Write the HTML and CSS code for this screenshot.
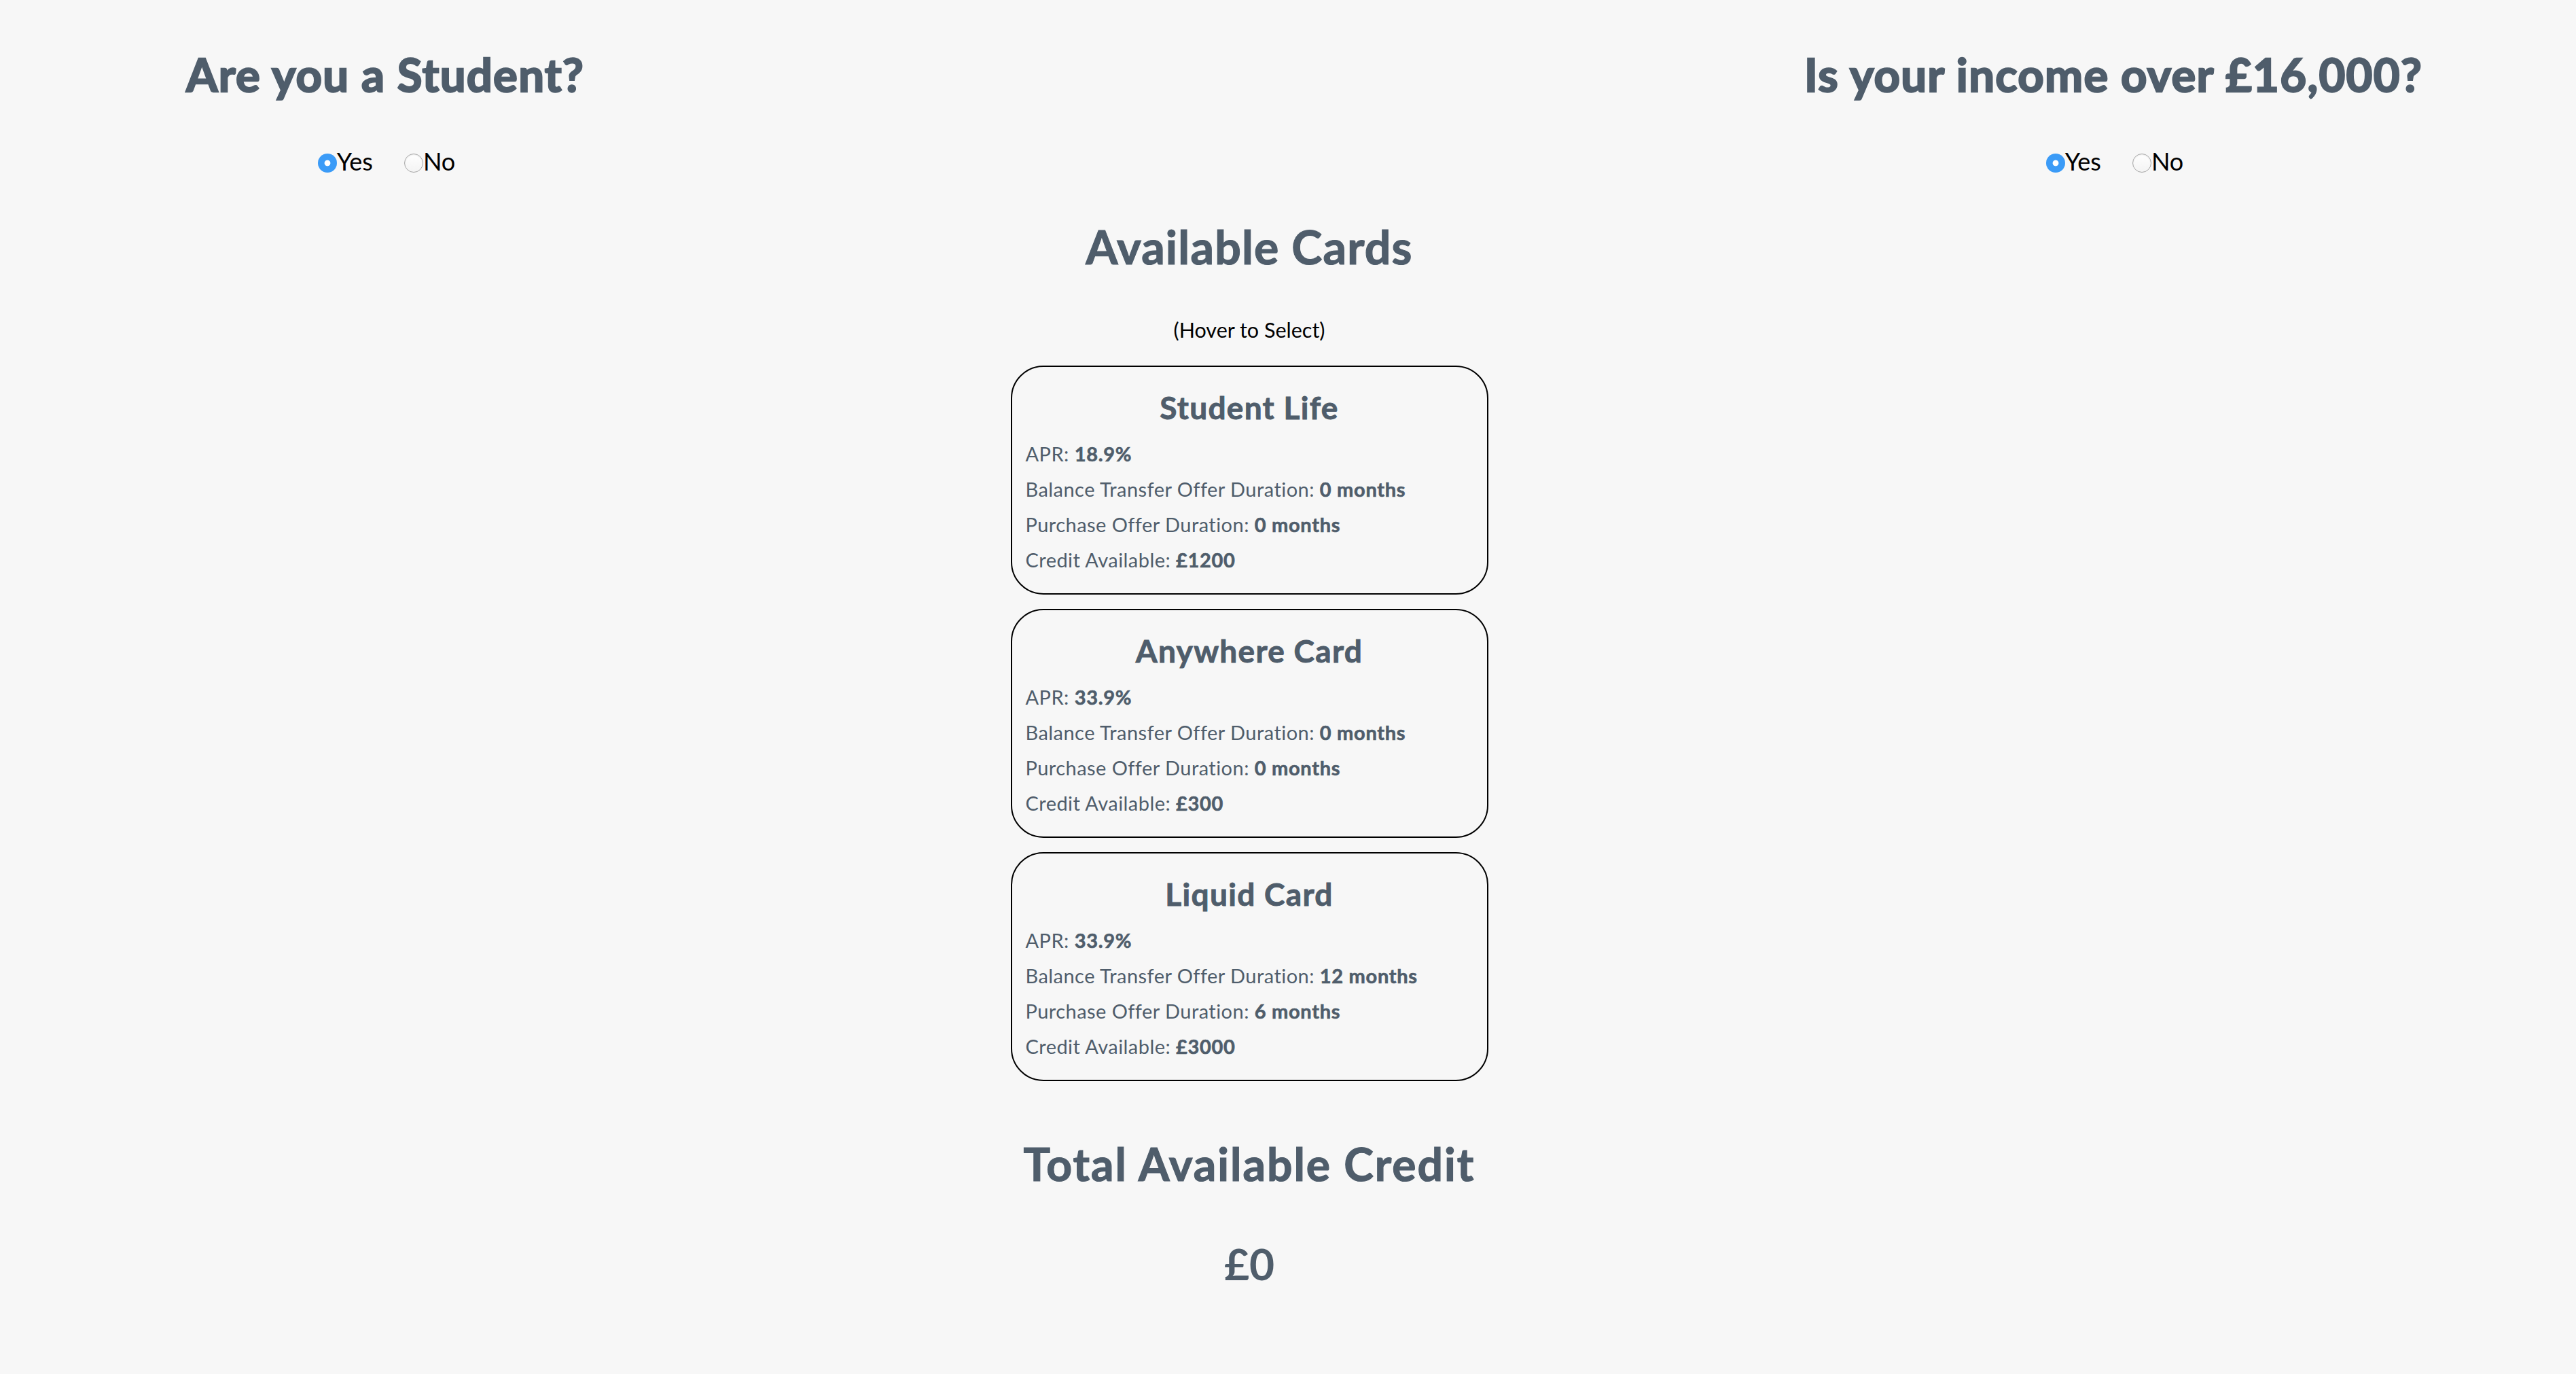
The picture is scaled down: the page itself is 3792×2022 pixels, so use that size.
FILE: index.html
```html
<!DOCTYPE html>
<html lang="en">
<head>
<meta charset="utf-8">
<title>Credit Cards</title>
<link rel="stylesheet" href="styles.css">
</head>
<body>
  <div class="top">
    <div class="question">
      <h1 class="q-title">Are you a Student?</h1>
      <div class="choices">
        <label class="choice"><input type="radio" name="student" checked>Yes</label>
        <label class="choice"><input type="radio" name="student">No</label>
      </div>
    </div>
    <div class="question">
      <h1 class="q-title">Is your income over £16,000?</h1>
      <div class="choices">
        <label class="choice"><input type="radio" name="income" checked>Yes</label>
        <label class="choice"><input type="radio" name="income">No</label>
      </div>
    </div>
  </div>

  <main class="main">
    <h2 class="section-title">Available Cards</h2>
    <p class="hint">(Hover to Select)</p>

    <div class="cards">
      <div class="card">
        <h3 class="card-title">Student Life</h3>
        <p class="row">APR: <b>18.9%</b></p>
        <p class="row">Balance Transfer Offer Duration: <b>0 months</b></p>
        <p class="row">Purchase Offer Duration: <b>0 months</b></p>
        <p class="row">Credit Available: <b>£1200</b></p>
      </div>
      <div class="card">
        <h3 class="card-title">Anywhere Card</h3>
        <p class="row">APR: <b>33.9%</b></p>
        <p class="row">Balance Transfer Offer Duration: <b>0 months</b></p>
        <p class="row">Purchase Offer Duration: <b>0 months</b></p>
        <p class="row">Credit Available: <b>£300</b></p>
      </div>
      <div class="card">
        <h3 class="card-title">Liquid Card</h3>
        <p class="row">APR: <b>33.9%</b></p>
        <p class="row">Balance Transfer Offer Duration: <b>12 months</b></p>
        <p class="row">Purchase Offer Duration: <b>6 months</b></p>
        <p class="row">Credit Available: <b>£3000</b></p>
      </div>
    </div>

    <h2 class="total-title">Total Available Credit</h2>
    <p class="total">£0</p>
  </main>
</body>
</html>
```

FILE: styles.css
```css
html, body {
  margin: 0;
  padding: 0;
}

body {
  background: #f7f7f7;
  font-family: Lato, "Liberation Sans", sans-serif;
  color: #4f5d6b;
}

h1, h2, h3, p {
  margin: 0;
}

.top {
  display: flex;
  justify-content: space-between;
  padding: 69px 181px 0 67px;
}

.question {
  width: 1000px;
  display: flex;
  flex-direction: column;
  align-items: center;
}

.q-title {
  font-size: 67px;
  font-weight: 700;
  line-height: 1.2;
  letter-spacing: 1.3px;
  color: #4f5d6b;
  -webkit-text-stroke: 2.4px #4f5d6b;
}

.choices {
  display: flex;
  align-items: center;
  gap: 46px;
  margin-top: 67px;
  padding-left: 4px;
}

.choice {
  display: flex;
  align-items: center;
  font-size: 36px;
  line-height: 1.2;
  color: #000;
}

.choice input {
  appearance: none;
  -webkit-appearance: none;
  width: 28px;
  height: 28px;
  margin: 0;
  border-radius: 50%;
  background: linear-gradient(#ffffff, #f3f3f3);
  border: 1.5px solid #a8a8a8;
  box-shadow: inset 0 1px 2px rgba(0, 0, 0, 0.1);
  box-sizing: border-box;
  position: relative;
  top: 2px;
}

.choice input:checked {
  border: none;
  background: radial-gradient(circle, #ffffff 0 4px, #3b9bf7 4.8px);
  box-shadow: none;
}

.main {
  display: flex;
  flex-direction: column;
  align-items: center;
  padding-right: 114px;
}

.section-title {
  margin-top: 62px;
  font-size: 68px;
  font-weight: 700;
  line-height: 1.2;
  letter-spacing: 1.2px;
  -webkit-text-stroke: 1.2px #4f5d6b;
}

.hint {
  margin-top: 64px;
  font-size: 30.5px;
  line-height: 1.2;
  color: #000;
}

.cards {
  margin-top: 34px;
  display: flex;
  flex-direction: column;
  gap: 21px;
}

.card {
  width: 703px;
  box-sizing: border-box;
  border: 2px solid #000;
  border-radius: 48px;
  padding: 32px 20px 23px 20px;
}

.card-title {
  text-align: center;
  font-size: 46px;
  font-weight: 700;
  line-height: 1.2;
  letter-spacing: 1.3px;
  -webkit-text-stroke: 0.9px #4f5d6b;
  margin-bottom: 15px;
}

.row {
  font-size: 29px;
  line-height: 52px;
  letter-spacing: 0.45px;
}

.row b {
  font-weight: 700;
  letter-spacing: 0.7px;
  -webkit-text-stroke: 0.6px #4f5d6b;
}

.total-title {
  margin-top: 82px;
  font-size: 66px;
  font-weight: 700;
  line-height: 1.2;
  letter-spacing: 2px;
  -webkit-text-stroke: 1.2px #4f5d6b;
}

.total {
  margin-top: 69px;
  font-size: 64px;
  font-weight: 700;
  line-height: 1.2;
}
```
